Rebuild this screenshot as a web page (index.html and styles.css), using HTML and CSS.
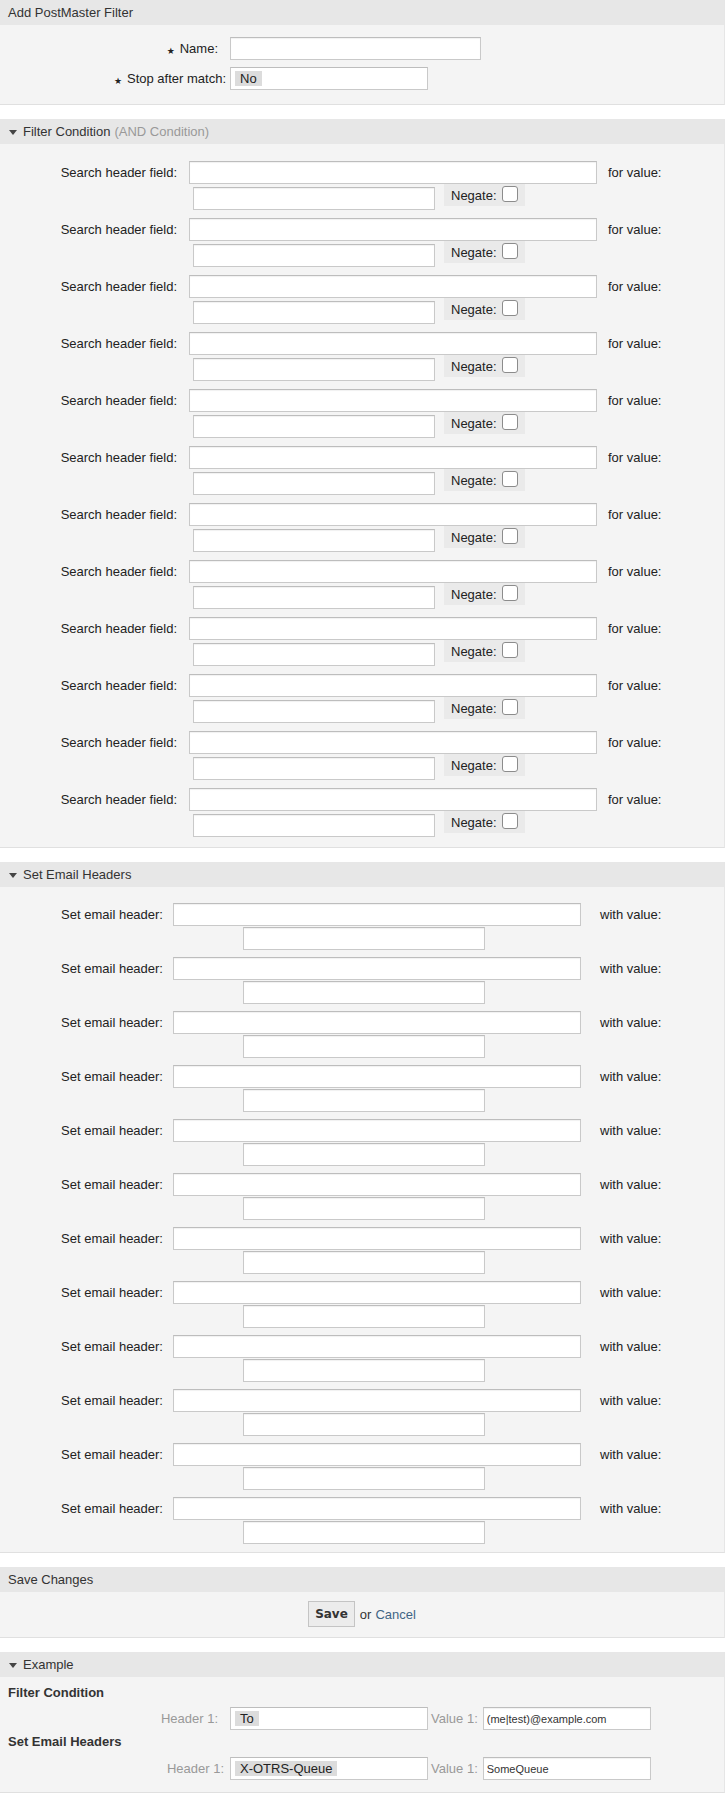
FILE: index.html
```html
<!DOCTYPE html>
<html lang="en">
<head>
<meta charset="utf-8">
<title>Add PostMaster Filter</title>
<link rel="stylesheet" href="styles.css">
</head>
<body>

<section class="widget">
  <h2 class="widget-head">Add PostMaster Filter</h2>
  <div class="widget-body general">
    <div class="form-row">
      <label class="form-label"><span class="marker">★</span>Name:</label>
      <input class="text w-name" type="text">
    </div>
    <div class="form-row">
      <label class="form-label label-select"><span class="marker">★</span>Stop after match:</label>
      <div class="select w-stop"><span class="token">No</span></div>
    </div>
  </div>
</section>

<section class="widget">
  <h2 class="widget-head"><span class="toggle"></span>Filter Condition <span class="muted">(AND Condition)</span></h2>
  <div class="widget-body cond-body">
    <div class="cond-row"><label class="cond-label">Search header field:</label><div class="cond-fields"><div class="line1"><input class="text w-hdr" type="text"><span class="for">for value:</span></div><div class="line2"><input class="text w-val" type="text"><span class="negate">Negate: <span class="check"></span></span></div></div></div>
    <div class="cond-row"><label class="cond-label">Search header field:</label><div class="cond-fields"><div class="line1"><input class="text w-hdr" type="text"><span class="for">for value:</span></div><div class="line2"><input class="text w-val" type="text"><span class="negate">Negate: <span class="check"></span></span></div></div></div>
    <div class="cond-row"><label class="cond-label">Search header field:</label><div class="cond-fields"><div class="line1"><input class="text w-hdr" type="text"><span class="for">for value:</span></div><div class="line2"><input class="text w-val" type="text"><span class="negate">Negate: <span class="check"></span></span></div></div></div>
    <div class="cond-row"><label class="cond-label">Search header field:</label><div class="cond-fields"><div class="line1"><input class="text w-hdr" type="text"><span class="for">for value:</span></div><div class="line2"><input class="text w-val" type="text"><span class="negate">Negate: <span class="check"></span></span></div></div></div>
    <div class="cond-row"><label class="cond-label">Search header field:</label><div class="cond-fields"><div class="line1"><input class="text w-hdr" type="text"><span class="for">for value:</span></div><div class="line2"><input class="text w-val" type="text"><span class="negate">Negate: <span class="check"></span></span></div></div></div>
    <div class="cond-row"><label class="cond-label">Search header field:</label><div class="cond-fields"><div class="line1"><input class="text w-hdr" type="text"><span class="for">for value:</span></div><div class="line2"><input class="text w-val" type="text"><span class="negate">Negate: <span class="check"></span></span></div></div></div>
    <div class="cond-row"><label class="cond-label">Search header field:</label><div class="cond-fields"><div class="line1"><input class="text w-hdr" type="text"><span class="for">for value:</span></div><div class="line2"><input class="text w-val" type="text"><span class="negate">Negate: <span class="check"></span></span></div></div></div>
    <div class="cond-row"><label class="cond-label">Search header field:</label><div class="cond-fields"><div class="line1"><input class="text w-hdr" type="text"><span class="for">for value:</span></div><div class="line2"><input class="text w-val" type="text"><span class="negate">Negate: <span class="check"></span></span></div></div></div>
    <div class="cond-row"><label class="cond-label">Search header field:</label><div class="cond-fields"><div class="line1"><input class="text w-hdr" type="text"><span class="for">for value:</span></div><div class="line2"><input class="text w-val" type="text"><span class="negate">Negate: <span class="check"></span></span></div></div></div>
    <div class="cond-row"><label class="cond-label">Search header field:</label><div class="cond-fields"><div class="line1"><input class="text w-hdr" type="text"><span class="for">for value:</span></div><div class="line2"><input class="text w-val" type="text"><span class="negate">Negate: <span class="check"></span></span></div></div></div>
    <div class="cond-row"><label class="cond-label">Search header field:</label><div class="cond-fields"><div class="line1"><input class="text w-hdr" type="text"><span class="for">for value:</span></div><div class="line2"><input class="text w-val" type="text"><span class="negate">Negate: <span class="check"></span></span></div></div></div>
    <div class="cond-row"><label class="cond-label">Search header field:</label><div class="cond-fields"><div class="line1"><input class="text w-hdr" type="text"><span class="for">for value:</span></div><div class="line2"><input class="text w-val" type="text"><span class="negate">Negate: <span class="check"></span></span></div></div></div>
  </div>
</section>

<section class="widget">
  <h2 class="widget-head"><span class="toggle"></span>Set Email Headers</h2>
  <div class="widget-body set-body">
    <div class="set-row"><label class="set-label">Set email header:</label><div class="set-fields"><div class="line1"><input class="text w-hdr" type="text"><span class="with">with value:</span></div><div class="line2 set-line2"><input class="text w-val" type="text"></div></div></div>
    <div class="set-row"><label class="set-label">Set email header:</label><div class="set-fields"><div class="line1"><input class="text w-hdr" type="text"><span class="with">with value:</span></div><div class="line2 set-line2"><input class="text w-val" type="text"></div></div></div>
    <div class="set-row"><label class="set-label">Set email header:</label><div class="set-fields"><div class="line1"><input class="text w-hdr" type="text"><span class="with">with value:</span></div><div class="line2 set-line2"><input class="text w-val" type="text"></div></div></div>
    <div class="set-row"><label class="set-label">Set email header:</label><div class="set-fields"><div class="line1"><input class="text w-hdr" type="text"><span class="with">with value:</span></div><div class="line2 set-line2"><input class="text w-val" type="text"></div></div></div>
    <div class="set-row"><label class="set-label">Set email header:</label><div class="set-fields"><div class="line1"><input class="text w-hdr" type="text"><span class="with">with value:</span></div><div class="line2 set-line2"><input class="text w-val" type="text"></div></div></div>
    <div class="set-row"><label class="set-label">Set email header:</label><div class="set-fields"><div class="line1"><input class="text w-hdr" type="text"><span class="with">with value:</span></div><div class="line2 set-line2"><input class="text w-val" type="text"></div></div></div>
    <div class="set-row"><label class="set-label">Set email header:</label><div class="set-fields"><div class="line1"><input class="text w-hdr" type="text"><span class="with">with value:</span></div><div class="line2 set-line2"><input class="text w-val" type="text"></div></div></div>
    <div class="set-row"><label class="set-label">Set email header:</label><div class="set-fields"><div class="line1"><input class="text w-hdr" type="text"><span class="with">with value:</span></div><div class="line2 set-line2"><input class="text w-val" type="text"></div></div></div>
    <div class="set-row"><label class="set-label">Set email header:</label><div class="set-fields"><div class="line1"><input class="text w-hdr" type="text"><span class="with">with value:</span></div><div class="line2 set-line2"><input class="text w-val" type="text"></div></div></div>
    <div class="set-row"><label class="set-label">Set email header:</label><div class="set-fields"><div class="line1"><input class="text w-hdr" type="text"><span class="with">with value:</span></div><div class="line2 set-line2"><input class="text w-val" type="text"></div></div></div>
    <div class="set-row"><label class="set-label">Set email header:</label><div class="set-fields"><div class="line1"><input class="text w-hdr" type="text"><span class="with">with value:</span></div><div class="line2 set-line2"><input class="text w-val" type="text"></div></div></div>
    <div class="set-row"><label class="set-label">Set email header:</label><div class="set-fields"><div class="line1"><input class="text w-hdr" type="text"><span class="with">with value:</span></div><div class="line2 set-line2"><input class="text w-val" type="text"></div></div></div>
  </div>
</section>

<section class="widget">
  <h2 class="widget-head">Save Changes</h2>
  <div class="widget-body save-body">
    <button class="btn-save" type="button">Save</button>
    <span class="or">or</span>
    <a class="cancel" href="#">Cancel</a>
  </div>
</section>

<section class="widget">
  <h2 class="widget-head"><span class="toggle"></span>Example</h2>
  <div class="widget-body example-body">
    <h3 class="ex-title">Filter Condition</h3>
    <div class="ex-row ex-row-first">
      <label class="ex-label">Header 1:</label>
      <div class="select w-ex"><span class="token">To</span></div>
      <label class="ex-vlabel">Value 1:</label>
      <input class="text w-exval" type="text" value="(me|test)@example.com">
    </div>
    <h3 class="ex-title">Set Email Headers</h3>
    <div class="ex-row ex-row-second">
      <label class="ex-label ex-label-shift">Header 1:</label>
      <div class="select w-ex"><span class="token">X-OTRS-Queue</span></div>
      <label class="ex-vlabel">Value 1:</label>
      <input class="text w-exval" type="text" value="SomeQueue">
    </div>
  </div>
</section>

</body>
</html>
```

FILE: styles.css
```css
html, body {
  margin: 0;
  padding: 0;
  background: #fff;
}

body {
  font-family: "Liberation Sans", Arial, sans-serif;
  font-size: 13px;
  color: #333;
}

.widget {
  margin: 0 0 14px 0;
  background: #f4f4f4;
  border-bottom: 1px solid #e0e0e0;
  border-right: 1px solid #e6e6e6;
}

.widget-head {
  margin: 0;
  height: 25px;
  line-height: 25px;
  padding: 0 8px;
  background: #e7e7e7;
  font-size: 13px;
  font-weight: normal;
  color: #333;
  display: flex;
  align-items: center;
}

.toggle {
  display: inline-block;
  width: 0;
  height: 0;
  border-left: 4px solid transparent;
  border-right: 4px solid transparent;
  border-top: 5px solid #444;
  margin: 1px 6px 0 1px;
}

.muted {
  color: #999;
  margin-left: 4px;
}

/* generic inputs */
.text {
  box-sizing: border-box;
  height: 23px;
  margin: 0;
  padding: 0 4px;
  border: 1px solid #c9c9c9;
  border-top-color: #bdbdbd;
  background: #fff;
  box-shadow: inset 0 1px 1px rgba(0, 0, 0, 0.06);
  font-family: "Liberation Sans", Arial, sans-serif;
  font-size: 12px;
  color: #333;
  border-radius: 0;
  outline: none;
}

.select {
  box-sizing: border-box;
  height: 23px;
  border: 1px solid #c9c9c9;
  border-top-color: #bdbdbd;
  background: #fff;
  display: flex;
  align-items: center;
  padding: 0 4px;
}

.token {
  background: #dcdcdc;
  height: 15px;
  line-height: 15px;
  padding: 0 5px;
  font-size: 13px;
  color: #222;
}

/* general section */
.general {
  padding: 12px 0 14px;
  display: flex;
  flex-direction: column;
  gap: 7px;
}

.form-row {
  display: grid;
  grid-template-columns: 218px auto;
  column-gap: 12px;
  align-items: center;
  justify-items: start;
}

.form-label {
  justify-self: end;
  color: #222;
  white-space: nowrap;
}

.label-select {
  margin-right: -8px;
}

.marker {
  font-family: "DejaVu Sans", sans-serif;
  font-size: 9px;
  color: #222;
  margin-right: 5px;
  position: relative;
  top: 1px;
}

.w-name { width: 251px; }
.w-stop { width: 198px; }

/* filter condition */
.cond-body {
  padding: 17px 0 10px;
  display: flex;
  flex-direction: column;
  gap: 8px;
}

.cond-row {
  display: grid;
  grid-template-columns: 177px auto;
  column-gap: 12px;
  align-items: start;
}

.cond-label,
.set-label {
  justify-self: end;
  line-height: 23px;
  color: #222;
  white-space: nowrap;
}

.cond-fields,
.set-fields {
  display: flex;
  flex-direction: column;
}

.line1 {
  display: flex;
  align-items: center;
}

.cond-fields .line1 { margin-bottom: 3px; }

.line2 {
  display: flex;
  align-items: flex-start;
}

.w-hdr { width: 408px; }
.w-val { width: 242px; }

.for {
  margin-left: 11px;
  color: #222;
}

.cond-fields .line2 { margin-left: 4px; }

.negate {
  margin-left: 9px;
  margin-top: -3px;
  width: 81px;
  height: 22px;
  box-sizing: border-box;
  padding: 0 0 0 7px;
  background: #eaeaea;
  display: flex;
  align-items: center;
  color: #222;
}

.check {
  display: inline-block;
  box-sizing: border-box;
  width: 16px;
  height: 16px;
  margin-left: 5px;
  border: 1px solid #8c8c8c;
  border-radius: 3px;
  background: #fff;
  position: relative;
  top: -1px;
}

/* set email headers */
.set-body {
  padding: 16px 0 8px;
  display: flex;
  flex-direction: column;
  gap: 7px;
}

.set-row {
  display: grid;
  grid-template-columns: 163px auto;
  column-gap: 10px;
  align-items: start;
}

.set-fields .line1 { margin-bottom: 1px; }

.with {
  margin-left: 19px;
  color: #222;
}

.set-line2 { margin-left: 70px; }

/* save */
.save-body {
  padding: 9px 0 10px;
  display: flex;
  justify-content: center;
  align-items: center;
}

.btn-save {
  box-sizing: border-box;
  height: 26px;
  padding: 0 6px;
  margin: 0 5px 0 0;
  border: 1px solid #c4c4c4;
  background: #ececec;
  font-family: "DejaVu Sans", sans-serif;
  font-weight: bold;
  font-size: 12px;
  color: #333;
  border-radius: 0;
}

.or {
  color: #333;
  margin-right: 4px;
}

.cancel {
  color: #3f6585;
  text-decoration: none;
}

/* example */
.example-body {
  padding: 8px 0 12px;
}

.ex-title {
  margin: 0 0 0 8px;
  height: 15px;
  font-size: 13px;
  font-weight: bold;
  color: #333;
  line-height: 15px;
}

.ex-row {
  display: flex;
  align-items: center;
  height: 23px;
}

.ex-row-first { margin: 7px 0 4px; }
.ex-row-second { margin: 8px 0 0; }

.ex-label {
  width: 218px;
  margin-right: 12px;
  text-align: right;
  color: #999;
  white-space: nowrap;
}

.ex-label-shift {
  width: 224px;
  margin-right: 6px;
}

.w-ex {
  width: 198px;
}

.ex-vlabel {
  margin: 0 5px 0 3px;
  color: #999;
  white-space: nowrap;
}

.w-exval {
  width: 168px;
  padding: 0 3px;
  font-size: 11px;
}
```
